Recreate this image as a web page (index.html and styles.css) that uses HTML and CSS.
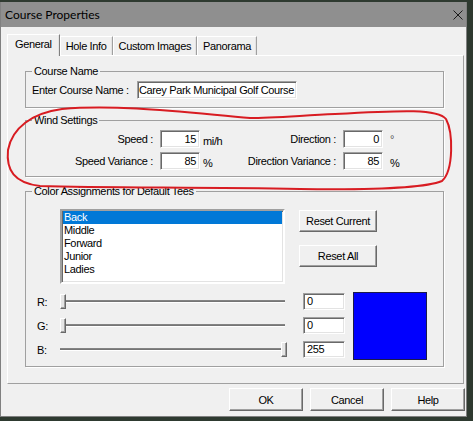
FILE: index.html
```html
<!DOCTYPE html>
<html>
<head>
<meta charset="utf-8">
<title>Course Properties</title>
<link rel="stylesheet" href="styles.css">
</head>
<body>
<div class="window">
  <div class="titlebar">
    <span class="title">Course Properties</span>
    <svg class="close" viewBox="0 0 10 10" width="10" height="10"><path d="M0.5 0.5 L9.5 9.5 M9.5 0.5 L0.5 9.5" stroke="#1a1a1a" stroke-width="1" fill="none"/></svg>
  </div>
  <div class="client">
    <div class="tabs">
      <div class="tab active">General</div>
      <div class="tab">Hole Info</div>
      <div class="tab">Custom Images</div>
      <div class="tab">Panorama</div>
    </div>
    <div class="pane">
      <fieldset class="group g-name">
        <legend>Course Name</legend>
        <div class="name-row">
          <span class="name-label">Enter Course Name :</span>
          <div class="field field-name"><span>Carey Park Municipal Golf Course</span></div>
        </div>
      </fieldset>

      <fieldset class="group g-wind">
        <legend>Wind Settings</legend>
        <div class="wind-row">
          <span class="wl1">Speed :</span>
          <div class="field num">15</div>
          <span class="unit u1">mi/h</span>
          <span class="wl2">Direction :</span>
          <div class="field num">0</div>
          <span class="unit u2 deg">°</span>
        </div>
        <div class="wind-row">
          <span class="wl1">Speed Variance :</span>
          <div class="field num">85</div>
          <span class="unit u1">%</span>
          <span class="wl2">Direction Variance :</span>
          <div class="field num">85</div>
          <span class="unit u2">%</span>
        </div>
      </fieldset>

      <fieldset class="group g-color">
        <legend>Color Assignments for Default Tees</legend>
        <div class="top-row">
          <div class="listbox">
            <div class="item selected">Back</div>
            <div class="item">Middle</div>
            <div class="item">Forward</div>
            <div class="item">Junior</div>
            <div class="item">Ladies</div>
          </div>
          <div class="side-buttons">
            <div class="btn btn-side">Reset Current</div>
            <div class="btn btn-side">Reset All</div>
          </div>
        </div>
        <div class="bottom-row">
          <div class="sliders">
            <div class="slider-row">
              <span class="slabel">R:</span>
              <div class="slider"><div class="thumb"></div></div>
            </div>
            <div class="slider-row">
              <span class="slabel">G:</span>
              <div class="slider"><div class="thumb"></div></div>
            </div>
            <div class="slider-row">
              <span class="slabel">B:</span>
              <div class="slider slider-end"><div class="thumb"></div></div>
            </div>
          </div>
          <div class="rgb-fields">
            <div class="field rgb">0</div>
            <div class="field rgb">0</div>
            <div class="field rgb">255</div>
          </div>
          <div class="swatch"></div>
        </div>
      </fieldset>
    </div>
    <div class="dialog-buttons">
      <div class="btn btn-main">OK</div>
      <div class="btn btn-main">Cancel</div>
      <div class="btn btn-main">Help</div>
    </div>
  </div>
</div>
<svg class="annotation" width="473" height="421" viewBox="0 0 473 421">
  <path d="M 250,118 C 190,113 120,104 62,109 C 32,113 12,128 8,150 C 6,170 14,183 40,186 C 110,188 200,187 300,189 C 370,190 425,188 442,181 C 454,170 453,132 446,119 C 438,109 405,110 335,114 C 295,116 270,118 250,118" fill="none" stroke="#d81c22" stroke-width="2" stroke-linecap="round"/>
</svg>
</body>
</html>
```

FILE: styles.css
```css
* { box-sizing: border-box; }
html, body { margin: 0; padding: 0; }
body {
  width: 473px;
  height: 421px;
  overflow: hidden;
  position: relative;
  background: #2e3a30;
  font-family: "Liberation Sans", Arial, sans-serif;
  font-size: 11px;
  letter-spacing: -0.35px;
  color: #000;
}
.window {
  margin-top: 2px;
  width: 467px;
  height: 415px;
  background: #f0f0f0;
  border: 1px solid #808080;
  border-top: 0;
  display: flex;
  flex-direction: column;
}
.titlebar {
  flex: none;
  height: 25px;
  background: #8f8f8f;
  display: flex;
  align-items: center;
  justify-content: space-between;
  padding: 0 3px 0 4px;
}
.title {
  font-family: Lato, "Noto Sans", sans-serif;
  font-size: 12px;
  letter-spacing: 0;
  color: #000;
}
.close { display: block; }
.client {
  flex: 1;
  display: flex;
  flex-direction: column;
  padding: 7px 0 0 6px;
}
.tabs {
  display: flex;
  align-items: flex-end;
  height: 21px;
}
.tab {
  height: 19px;
  line-height: 18px;
  padding: 0 5px;
  border-left: 1px solid #fff;
  border-top: 1px solid #fff;
  border-right: 1px solid #a0a0a0;
  box-shadow: inset -1px 0 0 #e3e3e3;
  white-space: nowrap;
}
.tab.active {
  height: 22px;
  line-height: 18px;
  padding: 0 7px;
  margin-bottom: -1px;
  background: #f0f0f0;
  position: relative;
  z-index: 1;
  border-right-color: #808080;
}
.pane {
  width: 457px;
  height: 329px;
  border: 1px solid;
  border-color: #fff #a0a0a0 #a0a0a0 #fff;
  padding: 0 0 0 17px;
}
.group {
  margin: 0;
  width: 419px;
  min-width: 0;
  border: 1px solid #a0a0a0;
  box-shadow: 1px 1px 0 #fff;
}
.group legend {
  padding: 0 2px;
  font-size: 11px;
  line-height: 13px;
}
.g-name { margin-top: 9px; padding: 3px 6px 8px 6px; }
.g-name legend { margin-left: 0; }
.g-wind { margin-top: 6px; padding: 3px 8px 6px 8px; }
.g-wind legend { margin-left: -2px; }
.g-color { margin-top: 8px; padding: 11px 11px 4px 11px; }
.g-color legend { margin-left: -5px; }

.field {
  background: #fff;
  border: 1px solid;
  border-color: #a0a0a0 #fff #fff #a0a0a0;
  box-shadow: inset 1px 1px 0 #696969, inset -1px -1px 0 #e3e3e3;
  height: 18px;
  line-height: 16px;
  white-space: nowrap;
}
.name-row { display: flex; align-items: center; height: 18px; }
.name-label { width: 105px; flex: none; }
.field-name {
  width: 160px;
  display: flex;
  justify-content: flex-end;
  overflow: hidden;
  padding: 0 2px 0 1px;
}
.wind-row { display: flex; align-items: center; height: 18px; }
.wind-row + .wind-row { margin-top: 4px; }
.wl1 { width: 119px; text-align: right; flex: none; }
.wl2 { width: 106px; text-align: right; flex: none; }
.num { width: 40px; margin-left: 7px; text-align: right; padding-right: 3px; flex: none; }
.unit { padding-top: 4px; flex: none; }
.u1 { width: 30px; padding-left: 3px; }
.u2 { padding-left: 7px; }
.deg { padding-top: 0; color: #555; }

.top-row { display: flex; padding-left: 23px; gap: 14px; }
.listbox {
  width: 225px;
  height: 75px;
  background: #fff;
  border: 2px solid;
  border-color: #a0a0a0 #fff #fff #a0a0a0;
  box-shadow: inset 1px 1px 0 #696969, inset -1px -1px 0 #e3e3e3;
  padding: 0 1px 0 1px;
}
.item { line-height: 13px; height: 13px; padding-left: 1px; }
.item.selected { background: #0078d7; color: #fff; }
.side-buttons { display: flex; flex-direction: column; gap: 13px; margin-top: 1px; }
.btn {
  background: #f0f0f0;
  border: 1px solid;
  border-color: #fff #696969 #696969 #fff;
  box-shadow: inset -1px -1px 0 #a0a0a0;
  text-align: center;
  display: flex;
  align-items: center;
  justify-content: center;
}
.btn-side { width: 78px; height: 22px; }

.bottom-row { display: flex; margin-top: 6px; align-items: flex-start; }
.sliders { display: flex; flex-direction: column; width: 250px; }
.slider-row { display: flex; align-items: center; height: 24px; }
.slabel { width: 23px; flex: none; }
.slider {
  width: 227px;
  height: 24px;
  display: flex;
  align-items: center;
  padding-right: 2px;
  background: linear-gradient(to bottom, transparent 10px, #8a8a8a 10px, #6e6e6e 12px, #ffffff 12px, #ffffff 13px, transparent 13px) no-repeat 0 0 / 225px 24px;
}
.slider-end { justify-content: flex-end; padding-right: 0; }
.thumb {
  width: 6px;
  height: 15px;
  margin-top: -1px;
  background: #e6e6e6;
  border: 1px solid;
  border-color: #fff #696969 #696969 #fff;
  box-shadow: inset -1px -1px 0 #a0a0a0;
}
.rgb-fields { display: flex; flex-direction: column; gap: 7px; padding-top: 3px; margin-left: 16px; }
.rgb { width: 42px; height: 17px; line-height: 15px; padding-left: 3px; }
.swatch {
  margin-left: 8px;
  margin-top: 2px;
  width: 74px;
  height: 68px;
  background: #0000ff;
  border: 1px solid #1b1b4a;
}
.dialog-buttons { display: flex; gap: 7px; margin-top: 4px; padding-left: 222px; }
.btn-main { width: 74px; height: 23px; }

.annotation {
  position: absolute;
  left: 0;
  top: 0;
  pointer-events: none;
}
```
